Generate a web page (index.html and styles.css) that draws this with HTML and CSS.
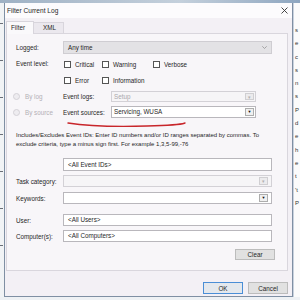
FILE: index.html
```html
<!DOCTYPE html>
<html lang="en">
  <head>
    <meta charset="utf-8" />
    <title>Filter Current Log</title>
    <link rel="stylesheet" href="styles.css">
  </head>

  <body>
    <div class="desk">
      <div class="bg-top"></div>
      <div class="bg-left">
        <span></span><span></span><span></span><span></span><span></span><span></span><span></span>
      </div>

      <div class="dialog">
        <div class="titlebar">
          <span>Filter Current Log</span>
          <svg class="close" width="7" height="7" viewBox="0 0 7 7">
            <path d="M0.5 0.5 L6.5 6.5 M6.5 0.5 L0.5 6.5" stroke="#333" stroke-width="0.9" />
          </svg>
        </div>

        <div class="tabs">
          <div class="tab active">Filter</div>
          <div class="tab">XML</div>
        </div>

        <div class="panel">
          <div class="row first">
            <label>Logged:</label>
            <div class="select">Any time
              <svg class="chev" width="5" height="3" viewBox="0 0 5 3">
                <path d="M0.3 0.3 L2.5 2.5 L4.7 0.3" fill="none" stroke="#8a8a8a" stroke-width="0.7" />
              </svg>
            </div>
          </div>

          <div class="levels">
            <label>Event level:</label>
            <div class="checks">
              <span class="check"><i></i>Critical</span>
              <span class="check"><i></i>Warning</span>
              <span class="check"><i></i>Verbose</span>
              <span class="check"><i></i>Error</span>
              <span class="check"><i></i>Information</span>
            </div>
          </div>

          <div class="srow logs">
            <span class="radio"><i></i>By log</span>
            <label>Event logs:</label>
            <div class="combo off">Setup<span class="drop">▾</span></div>
          </div>

          <div class="srow sources">
            <span class="radio"><i></i>By source</span>
            <label>Event sources:</label>
            <div class="combo">Servicing, WUSA<span class="drop on">▼</span></div>
          </div>

          <p class="desc">
            Includes/Excludes Event IDs: Enter ID numbers and/or ID ranges separated by commas. To<br>
            exclude criteria, type a minus sign first. For example 1,3,5-99,-76
          </p>

          <div class="row ids">
            <label></label>
            <div class="field tall">&lt;All Event IDs&gt;</div>
          </div>

          <div class="row task">
            <label>Task category:</label>
            <div class="field off">&nbsp;<span class="drop">▾</span></div>
          </div>

          <div class="row keys">
            <label>Keywords:</label>
            <div class="field">&nbsp;<span class="drop on">▼</span></div>
          </div>

          <div class="row user">
            <label>User:</label>
            <div class="field">&lt;All Users&gt;</div>
          </div>

          <div class="row comp">
            <label>Computer(s):</label>
            <div class="field">&lt;All Computers&gt;</div>
          </div>

          <div class="clear-row">
            <button class="btn">Clear</button>
          </div>
        </div>

        <div class="footer">
          <button class="btn ok">OK</button>
          <button class="btn">Cancel</button>
        </div>

        <!-- red pen mark under "Event sources" -->
        <svg class="pen" width="130" height="10" viewBox="0 0 130 10">
          <path d="M1 3 C 20 6, 45 7, 80 6 S 115 4, 118 3" fill="none" stroke="#c8262b" stroke-width="1.4" stroke-linecap="round" />
        </svg>
      </div>

      <div class="bg-right">s<br>e<br>c<br>s<br>n<br>s<br>P<br>d<br>e<br>h<br>e<br>t<br>'t<br>P</div>
      <div class="bg-bottom"></div>
    </div>
  </body>
</html>
```

FILE: styles.css
```css
body {
  margin: 0;
  background: #f4f6f8;
  font-family: "Liberation Sans", Arial, sans-serif;
  font-size: 6.3px;
  color: #1f1f1f;
}
.desk {
  width: 300px;
  height: 300px;
  display: grid;
  grid-template-columns: 4px 289px 7px;
  grid-template-rows: 3px 294px 3px;
  overflow: hidden;
}
.bg-top {
  grid-column: 1 / 4;
  background: linear-gradient(to right, #9fb1c4, #c4d0dc 60%, #8ea6c0);
}
.bg-left {
  background: #f1f3f5;
  display: flex;
  flex-direction: column;
  gap: 36px;
  padding-top: 20px;
}
.bg-left span {
  display: block;
  width: 3px;
  height: 1px;
  background: #6a6f78;
}
.bg-right {
  background: #fbfbfb;
  color: #333;
  font-size: 6px;
  line-height: 13.3px;
  padding-top: 21px;
  padding-left: 1px;
  overflow: hidden;
  border-left: 1px solid #c9d2de;
}
.bg-bottom {
  grid-column: 1 / 4;
  background: #eef1f4;
}

.dialog {
  position: relative;
  background: #f3f0f5;
  border: 1px solid #7f8fa3;
  border-top: 0;
  display: flex;
  flex-direction: column;
}
.titlebar {
  height: 15px;
  background: #fcfbfd;
  display: flex;
  align-items: center;
  justify-content: space-between;
  padding: 0 4px 0 2px;
  font-size: 6.6px;
}

.tabs {
  display: flex;
  align-items: flex-end;
  margin-top: 3px;
  padding-left: 1px;
  height: 12px;
}
.tab {
  height: 10px;
  line-height: 10px;
  padding: 0 7px 0 9px;
  background: #ebe8ee;
  border: 1px solid #d8d5dc;
  border-bottom: 0;
  border-left: 0;
}
.tab.active {
  height: 12px;
  line-height: 11px;
  padding: 0 8px 0 4px;
  background: #faf9fb;
  border-left: 1px solid #d8d5dc;
  position: relative;
  top: 1px;
}

.panel {
  height: 236px;
  margin: 0 4px 0 1px;
  background: #f8f6f9;
  border: 1px solid #d9d6dd;
  padding: 0 0 0 9px;
}

.row {
  display: flex;
  align-items: center;
}
.row label {
  width: 47px;
  flex: none;
}
.first {
  margin-top: 7px;
  height: 13px;
}
.select {
  width: 209px;
  height: 13px;
  box-sizing: border-box;
  background: #e3e2e5;
  border: 1px solid #cfcdd2;
  padding: 0 4px;
  line-height: 11px;
  display: flex;
  align-items: center;
  justify-content: space-between;
}

.levels {
  display: flex;
  margin-top: 2px;
}
.levels label {
  width: 47px;
  line-height: 16px;
  flex: none;
}
.checks {
  display: grid;
  grid-template-columns: 38px 51px auto;
  grid-auto-rows: 16px;
  align-items: center;
  padding-left: 1px;
}
.check {
  display: flex;
  align-items: center;
}
.check i {
  width: 5px;
  height: 5px;
  border: 1px solid #555;
  background: #fff;
  margin-right: 4px;
}

.srow {
  display: grid;
  grid-template-columns: 50px 48px 145px;
  align-items: center;
  margin-left: -3px;
}
.logs {
  margin-top: 3px;
  height: 11px;
}
.sources {
  margin-top: 4px;
  height: 12px;
}
.radio {
  display: flex;
  align-items: center;
  color: #b3b0b6;
}
.radio i {
  width: 5px;
  height: 5px;
  border: 1px solid #d4d1d7;
  border-radius: 50%;
  background: #eeecf0;
  margin-right: 5px;
}
.combo {
  height: 12px;
  box-sizing: border-box;
  background: #fff;
  border: 1px solid #b9b7bc;
  padding-left: 2px;
  line-height: 10px;
  display: flex;
  justify-content: space-between;
}
.logs .combo {
  height: 11px;
  line-height: 9px;
}
.combo.off,
.field.off {
  background: #f6f5f7;
  border-color: #d3d1d6;
  color: #a9a7ac;
}
.drop {
  width: 7px;
  margin: 1px 1px 1px 0;
  background: #ecebed;
  border: 1px solid #d0cfd2;
  color: #b0b0b0;
  font-size: 5px;
  line-height: 6px;
  text-align: center;
}
.drop.on {
  background: #f0f0f0;
  border-color: #adadad;
  color: #111;
  font-size: 4px;
}

.desc {
  margin: 13px 0 0;
  line-height: 9px;
  font-size: 6px;
}

.field {
  width: 209px;
  height: 12px;
  box-sizing: border-box;
  background: #fff;
  border: 1px solid #b9b7bc;
  padding-left: 4px;
  line-height: 10px;
  display: flex;
  justify-content: space-between;
}
.field .drop {
  margin-right: 3px;
}
.field.tall {
  height: 13px;
  line-height: 11px;
}
.ids {
  margin-top: 9px;
}
.task {
  margin-top: 4px;
}
.keys {
  margin-top: 5px;
}
.user {
  margin-top: 10px;
}
.comp {
  margin-top: 4px;
}

.clear-row {
  display: flex;
  justify-content: flex-end;
  margin: 7px 12px 0 0;
}
.btn {
  width: 40px;
  height: 11px;
  padding: 0;
  font-family: inherit;
  font-size: 6.3px;
  color: #1f1f1f;
  background: #e1e1e1;
  border: 1px solid #bcbcbc;
}

.footer {
  display: flex;
  justify-content: flex-end;
  gap: 5px;
  margin: 11px 4px 0 0;
}
.footer .btn {
  height: 12px;
}
.btn.ok {
  border-color: #4a8ed6;
  background: #e4e8ed;
}

.pen {
  position: absolute;
  left: 62px;
  top: 117px;
}
```
